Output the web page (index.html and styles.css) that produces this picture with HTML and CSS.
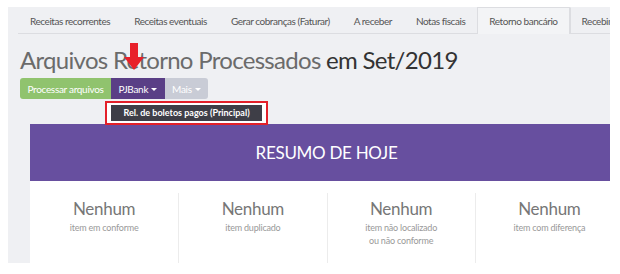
FILE: index.html
```html
<!DOCTYPE html>
<html lang="pt-BR">
<head>
    <meta charset="UTF-8">
    <meta name="viewport" content="width=device-width, initial-scale=1.0">
    <title>Retorno bancário</title>
    <link rel="stylesheet" href="styles.css">
</head>
<body>
    <div class="page">
        <ul class="tabs">
            <li>Receitas recorrentes</li>
            <li>Receitas eventuais</li>
            <li>Gerar cobranças (Faturar)</li>
            <li>A receber</li>
            <li>Notas fiscais</li>
            <li class="active">Retorno bancário</li>
            <li>Recebimentos</li>
        </ul>

        <h1 class="title">Arquivos Retorno Processados <span>em Set/2019</span></h1>

        <div class="toolbar">
            <div class="btn-group">
                <button class="btn btn-green">Processar arquivos</button>
                <button class="btn btn-purple">PJBank <span class="caret"></span></button>
                <button class="btn btn-grey">Mais <span class="caret"></span></button>
            </div>
            <svg class="arrow" width="20" height="28" viewBox="0 0 20 28">
                <path d="M6 0 H14 V14 H20 L10 27 L0 14 H6 Z" fill="#e8202a"/>
            </svg>
            <div class="menu-highlight">
                <div class="menu">Rel. de boletos pagos (Principal)</div>
            </div>
        </div>

        <div class="card">
            <div class="card-head">RESUMO DE HOJE</div>
            <div class="stats">
                <div class="stat">
                    <div class="stat-value">Nenhum</div>
                    <div class="stat-label">item em conforme</div>
                </div>
                <div class="stat">
                    <div class="stat-value">Nenhum</div>
                    <div class="stat-label">item duplicado</div>
                </div>
                <div class="stat">
                    <div class="stat-value">Nenhum</div>
                    <div class="stat-label">item não localizado<br>ou não conforme</div>
                </div>
                <div class="stat">
                    <div class="stat-value">Nenhum</div>
                    <div class="stat-label">item com diferença</div>
                </div>
            </div>
        </div>
    </div>
</body>
</html>
```

FILE: styles.css
```css
body {
    margin: 0;
    background-color: #fff;
    font-family: Lato, "Open Sans", sans-serif;
}

.page {
    margin: 7px 0 0 8px;
    width: 602px;
    height: 256px;
    background-color: #eff0f3;
    overflow-x: clip;
}

.tabs {
    list-style: none;
    margin: 0 0 0 10px;
    padding: 0;
    display: flex;
    height: 26px;
    border-bottom: 1px solid #dcdde1;
    white-space: nowrap;
}

.tabs li {
    padding: 0 11px;
    font-size: 10px;
    letter-spacing: -0.45px;
    color: #555;
    line-height: 26px;
    border: 1px solid transparent;
    border-bottom: none;
}

.tabs li.active {
    border-color: #dcdde1;
    background-color: #f3f4f6;
    margin-bottom: -1px;
    height: 27px;
    box-sizing: border-box;
}

.tabs li.active + li {
    border-left-color: #dcdde1;
}

.title {
    margin: 11px 0 0 12px;
    font-size: 24px;
    letter-spacing: -0.7px;
    font-weight: 400;
    color: #6b6b6b;
    line-height: 30px;
}

.title span {
    color: #333;
}

.toolbar {
    position: relative;
    margin: 3px 0 0 12px;
    height: 46px;
}

.btn-group {
    display: flex;
}

.btn {
    border: none;
    height: 21px;
    padding: 0;
    font-family: Lato, sans-serif;
    font-size: 10px;
    letter-spacing: -0.3px;
    color: #fff;
}

.btn-green {
    width: 91px;
    background-color: #90c36e;
    border-radius: 3px 0 0 3px;
}

.btn-purple {
    width: 54px;
    background-color: #5a3f86;
}

.btn-grey {
    width: 43px;
    background-color: #c9ccd6;
    border-radius: 0 3px 3px 0;
}

.caret {
    display: inline-block;
    width: 0;
    height: 0;
    margin-left: 1px;
    border-left: 3px solid transparent;
    border-right: 3px solid transparent;
    border-top: 3px solid #fff;
    vertical-align: middle;
}

.arrow {
    position: absolute;
    left: 104px;
    top: -35px;
}

.menu-highlight {
    position: absolute;
    left: 85px;
    top: 23px;
    border: 2px solid #e3202a;
    background-color: #fff;
    padding: 2px 4px 2px 4px;
}

.menu {
    width: 151px;
    height: 16px;
    background-color: #3e3e47;
    color: #fff;
    font-size: 9px;
    font-weight: 700;
    line-height: 16px;
    text-align: center;
}

.card {
    margin-left: 22px;
    width: 593px;
    background-color: #fff;
}

.card-head {
    background-color: #674f9f;
    color: #fff;
    height: 57px;
    line-height: 57px;
    text-align: center;
    font-size: 17px;
    letter-spacing: -0.3px;
}

.stats {
    display: grid;
    grid-template-columns: repeat(4, 1fr);
    padding: 12px 0 0;
}

.stat {
    text-align: center;
    border-left: 1px solid #ececec;
    height: 73px;
    padding-top: 6px;
    box-sizing: border-box;
}

.stat:first-child {
    border-left: none;
}

.stat-value {
    font-size: 17px;
    color: #777;
    font-weight: 400;
    letter-spacing: -0.3px;
    line-height: 20px;
}

.stat-label {
    margin-top: 2px;
    font-size: 9px;
    letter-spacing: -0.2px;
    color: #999;
    line-height: 13px;
}
```
